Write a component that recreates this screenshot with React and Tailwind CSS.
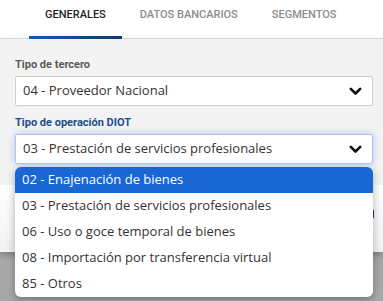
import React from 'react'

const OPTIONS = [
  '02 - Enajenación de bienes',
  '03 - Prestación de servicios profesionales',
  '06 - Uso o goce temporal de bienes',
  '08 - Importación por transferencia virtual',
  '85 - Otros',
]

function Chevron() {
  return (
    <svg width="13" height="9" viewBox="0 0 13 9" className="shrink-0">
      <path d="M1.8 1.8 L6.5 6.5 L11.2 1.8" fill="none" stroke="#111" strokeWidth="2.6" strokeLinecap="round" strokeLinejoin="round" />
    </svg>
  )
}

function Tab({ label, active }) {
  return (
    <div className={['relative h-[39px] px-[16px] pt-[8px] text-[11px] leading-[14px] font-medium', active ? 'text-[#1f1f1f]' : 'text-[#8c8c8c]'].join(' ')}>
      {label}
      {active && <span className="absolute left-0 right-0 bottom-0 h-[3px] bg-gradient-to-r from-[#0a5db6] to-[#0c3b72]" />}
    </div>
  )
}

export default function App() {
  const font = { fontFamily: '"Open Sans", "Liberation Sans", sans-serif' }
  return (
    <div className="w-[383px] h-[301px] overflow-hidden bg-[#a8a8a8] flex flex-col" style={{ fontFamily: 'Roboto, "Liberation Sans", sans-serif' }}>
      <div className="h-[39px] bg-white border-b border-[#dcdcdc] flex pl-[29px] gap-[2px] shrink-0">
        <Tab label="GENERALES" active />
        <Tab label="DATOS BANCARIOS" />
        <Tab label="SEGMENTOS" />
      </div>

      <div className="shadow-[0_3px_6px_rgba(0,0,0,0.25)]">
        <div className="bg-[#f3f3f3] pl-[15px] pr-[10px] pt-[19px] pb-[21px] flex flex-col">
          <div className="text-[11px] leading-[14px] font-bold text-[#5a5a5a] mb-[4px]">Tipo de tercero</div>
          <div className="h-[30px] bg-white border border-[#cfcfcf] rounded-[2px] flex items-center justify-between pl-[7px] pr-[10px] text-[13px] text-[#333]" style={font}>
            <span>04 - Proveedor Nacional</span>
            <Chevron />
          </div>

          <div className="text-[11px] leading-[14px] font-bold text-[#1b4e8c] mt-[10px] mb-[4px]">Tipo de operación DIOT</div>
          <div className="relative">
            <div className="h-[30px] bg-white border border-[#a9c7f0] rounded-[2px] shadow-[0_0_7px_rgba(90,140,230,0.45)] flex items-center justify-between pl-[7px] pr-[10px] text-[13px] text-[#333]" style={font}>
              <span>03 - Prestación de servicios profesionales</span>
              <Chevron />
            </div>
            <ul className="absolute z-10 left-0 right-0 top-[33px] bg-white rounded-[6px] overflow-hidden shadow-[0_3px_8px_rgba(0,0,0,0.3)] text-[13px]" style={font}>
              {OPTIONS.map((o, i) => (
                <li key={o} className={['h-[26px] flex items-center pl-[7px]', i === 0 ? 'bg-[#1967d2] text-white' : 'text-[#333]'].join(' ')}>{o}</li>
              ))}
            </ul>
          </div>
        </div>
        <div className="h-[67px] bg-gradient-to-b from-white to-[#f2f2f2] flex justify-end pr-[9px] pt-[24px]">
          <div className="w-[30px] h-[10px] rounded-[2px] bg-[#1c3d66]" />
        </div>
      </div>
    </div>
  )
}
